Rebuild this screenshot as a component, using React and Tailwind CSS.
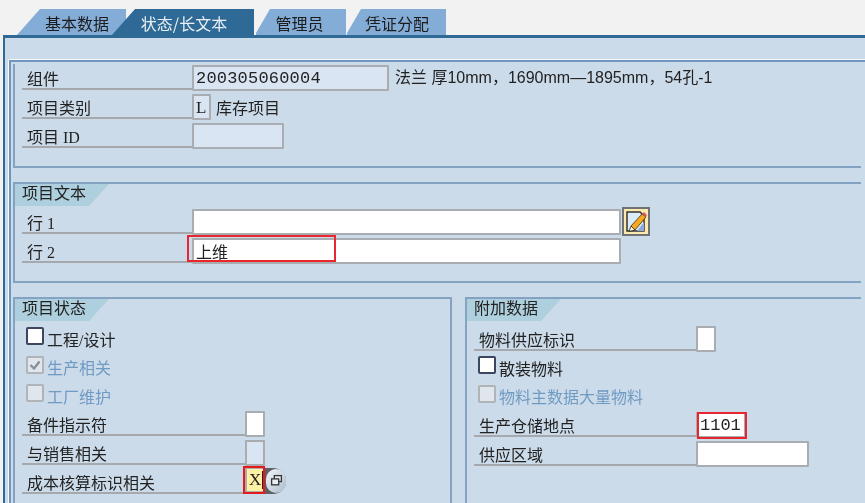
const label = "font-['Liberation_Serif','Noto_Sans_CJK_SC',serif]";
const mono = "font-['Liberation_Mono','Noto_Sans_CJK_SC',monospace]";

function Tab({ label, active, slant, className }) {
  return (
    <div
      className={`h-[26px] pt-[2px] flex items-center justify-center text-[16px] leading-none ${slant} ${active ? "bg-[#2f6996] text-[#e8f0f6]" : "bg-[#83acd7] text-[#1c1c1c]"} ${className}`}
    >
      {label}
    </div>
  );
}

function Field({ value, w, kind = "display", className = "" }) {
  const bg = kind === "white" ? "bg-white" : kind === "yellow" ? "bg-[#fdf1a5]" : "bg-[#d9e5f3]";
  return (
    <div
      className={`h-[26px] ${w} ${bg} shrink-0 border-2 border-[#a9adb1] rounded-[1px] flex items-center pl-[2px] text-[17px] leading-none text-[#222] ${mono} ${className}`}
    >
      {value}
    </div>
  );
}

function Row({ label: text, labelW, field, after, className = "" }) {
  return (
    <div className={`h-[29px] flex items-start ${className}`}>
      <div
        className={`${labelW} h-[25px] shrink-0 border-b-2 border-[#a5a9ad] pl-[5px] text-[16px] leading-[30px] text-[#222] whitespace-nowrap ${label}`}
      >
        {text}
      </div>
      {field}
      {after}
    </div>
  );
}

function Check({ label: text, checked, disabled }) {
  return (
    <div className="h-[28.5px] flex items-center">
      <div
        className={`w-[18px] h-[18px] -mt-[8px] shrink-0 rounded-[2px] border-2 flex items-center justify-center ${disabled ? "border-[#b1b4b7] bg-[#dfe6ee]" : "border-[#3d4660] bg-white"}`}
      >
        {checked && (
          <svg viewBox="0 0 14 14" className="w-[14px] h-[14px]">
            <path d="M2.5 7 L6 10.5 L11.5 3.5" fill="none" stroke="#8a8f95" strokeWidth="2.4" />
          </svg>
        )}
      </div>
      <span className={`ml-[3px] mt-px text-[16px] leading-none whitespace-nowrap ${label} ${disabled ? "text-[#6f9ac2]" : "text-[#222]"}`}>
        {text}
      </span>
    </div>
  );
}

function Group({ title, className = "", children }) {
  return (
    <div className={`border-l-2 border-t-2 border-[#84a3c3] ${className}`}>
      <div className="h-[22px] w-[94px] bg-[#aecfdd] [clip-path:polygon(0_0,100%_0,74px_100%,0_100%)] pl-[7px] text-[16px] leading-[17px] text-[#222] whitespace-nowrap font-['Noto_Sans_CJK_SC',sans-serif]">
        {title}
      </div>
      {children}
    </div>
  );
}

function EditIcon() {
  return (
    <div className="w-[28px] h-[29px] shrink-0 ml-px -mt-[2px] border-2 border-[#6f7275] bg-[#fbe9ae] flex items-center justify-center">
      <svg viewBox="0 0 24 24" className="w-[24px] h-[24px]">
        <path d="M3 2 H16 L20 6 V21 H3 Z" fill="#dcecf7" stroke="#333" strokeWidth="1.5" />
        <path d="M13 21 H20 V12 Z" fill="#8fa6e0" />
        <path d="M7 16 L18 4 L22 7 L11 20 Z" fill="#f6a821" stroke="#40300a" strokeWidth="0.8" />
        <path d="M18 4 L20 2 L23 5 L22 7 Z" fill="#d65a6a" />
        <path d="M7 16 L5 21.5 L11 20 Z" fill="#fff2d0" stroke="#222" strokeWidth="0.8" />
      </svg>
    </div>
  );
}

function WindowButton() {
  return (
    <div className="w-[21px] h-[26px] -mt-[1px] shrink-0 bg-[#5e6063] rounded-r-[13px] flex items-center justify-end">
      <div className="w-[20px] h-[24px] rounded-[12px] bg-gradient-to-br from-[#f4f7fa] to-[#a9bccd] flex items-center justify-center">
        <svg viewBox="0 0 12 12" className="w-[13px] h-[13px]">
          <rect x="4" y="1.5" width="6.5" height="5.5" fill="#e8eef4" stroke="#333" strokeWidth="1.2" />
          <rect x="1.5" y="4.5" width="6.5" height="5.5" fill="#e8eef4" stroke="#333" strokeWidth="1.2" />
        </svg>
      </div>
    </div>
  );
}

export default function App() {
  return (
    <div className="w-[865px] h-[503px] overflow-hidden bg-[#f2f2f2] flex flex-col font-['Noto_Sans_CJK_SC',sans-serif] blur-[0.5px]">
      <div className="h-[35px] shrink-0 flex items-end pl-[17px]">
        <Tab label="基本数据" slant="[clip-path:polygon(23px_0,100%_0,100%_100%,0_100%)]" className="w-[109px] pl-[13px] pr-[2px]" />
        <Tab label="状态/长文本" active slant="[clip-path:polygon(23px_0,100%_0,100%_100%,0_100%)]" className="w-[142px] -ml-[14px] pl-[2px]" />
        <Tab label="管理员" slant="[clip-path:polygon(14px_0,100%_0,100%_100%,0_100%,0_24px)]" className="w-[90px] ml-[2px] pr-[3px]" />
        <Tab label="凭证分配" slant="[clip-path:polygon(14px_0,100%_0,100%_100%,0_100%,0_24px)]" className="w-[99px] ml-[1px] pl-[1px]" />
      </div>

      <div className="flex-1 ml-[3px] border-t-[3px] border-l-2 border-[#2f6996] bg-[#ccdbea] pt-[22px] pl-[4px] flex flex-col min-h-0">
        <div className="flex-1 border-t-2 border-l-2 border-[#6f97bd] pl-[2px] pt-[2px] pr-[4px] flex flex-col min-h-0 shadow-[0_-1px_0_#f4f8fb,-1px_0_0_#f4f8fb]">
          <div className="h-[104px] shrink-0 border-l-2 border-b-2 border-[#84a3c3] pl-[7px] pt-[1px]">
            <Row
              label="组件"
              labelW="w-[170px]"
              field={<Field value="200305060004" w="w-[197px]" className="tracking-[0.2px]" />}
              after={<span className="ml-[6px] text-[16px] leading-[26px] text-[#222] whitespace-nowrap font-['Liberation_Sans','Noto_Sans_CJK_SC',sans-serif]">法兰 厚10mm，1690mm—1895mm，54孔-1</span>}
            />
            <Row
              label="项目类别"
              labelW="w-[170px]"
              field={<Field value="L" w="w-[19px]" className={label} />}
              after={<span className="ml-[5px] text-[16px] leading-[26px] text-[#222] whitespace-nowrap">库存项目</span>}
            />
            <Row label="项目 ID" labelW="w-[170px]" field={<Field w="w-[92px]" />} />
          </div>

          <Group title="项目文本" className="mt-[14px] h-[101px] shrink-0 border-b-2">
            <div className="pl-[7px] pt-[3px]">
              <Row label="行 1" labelW="w-[170px]" field={<Field kind="white" w="w-[429px]" />} after={<EditIcon />} />
              <Row
                label="行 2"
                labelW="w-[170px]"
                field={
                  <div className="relative">
                    <Field kind="white" value={<span className="text-[16px] font-['Noto_Sans_CJK_SC',sans-serif]">上维</span>} w="w-[429px]" />
                    <div className="absolute -left-[5px] -top-[3px] w-[149px] h-[27px] border-2 border-[#e8262e]" />
                  </div>
                }
              />
            </div>
          </Group>

          <div className="mt-[14px] flex-1 flex gap-[13px]">
            <Group title="项目状态" className="w-[439px] border-r-2 border-r-[#84a3c3]">
              <div className="pl-[11px] pt-[5px]">
                <Check label="工程/设计" />
                <Check label="生产相关" checked disabled />
                <Check label="工厂维护" disabled />
              </div>
              <div className="pl-[7px] -mt-[1px]">
                <Row label="备件指示符" labelW="w-[223px]" field={<Field kind="white" w="w-[20px]" />} />
                <Row label="与销售相关" labelW="w-[223px]" field={<Field w="w-[20px]" />} />
                <Row
                  label="成本核算标识相关"
                  labelW="w-[223px]"
                  field={
                    <div className="relative -mt-[2px]">
                      <Field
                        kind="yellow"
                        value={
                          <>
                            <span className={label}>X</span>
                            <span className="w-px h-[18px] bg-[#222] ml-[1px]" />
                          </>
                        }
                        w="w-[20px]"
                        className="pl-[1px]"
                      />
                      <div className="absolute -left-[2px] -top-[1px] w-[22px] h-[28px] border-2 border-[#e8181f]" />
                    </div>
                  }
                  after={<WindowButton />}
                />
              </div>
            </Group>

            <Group title="附加数据" className="flex-1">
              <div className="pl-[7px] pt-[5px]">
                <Row label="物料供应标识" labelW="w-[222px]" field={<Field kind="white" w="w-[20px]" />} />
                <div className="pl-[4px]">
                  <Check label="散装物料" />
                  <Check label="物料主数据大量物料" disabled />
                </div>
                <Row
                  label="生产仓储地点"
                  labelW="w-[222px]"
                  field={
                    <div className="relative">
                      <Field kind="white" value="1101" w="w-[50px]" />
                      <div className="absolute left-px top-0 w-[50px] h-[27px] border-2 border-[#e8262e]" />
                    </div>
                  }
                />
                <Row label="供应区域" labelW="w-[222px]" field={<Field kind="white" w="w-[113px]" />} />
              </div>
            </Group>
          </div>
        </div>
      </div>
    </div>
  );
}
